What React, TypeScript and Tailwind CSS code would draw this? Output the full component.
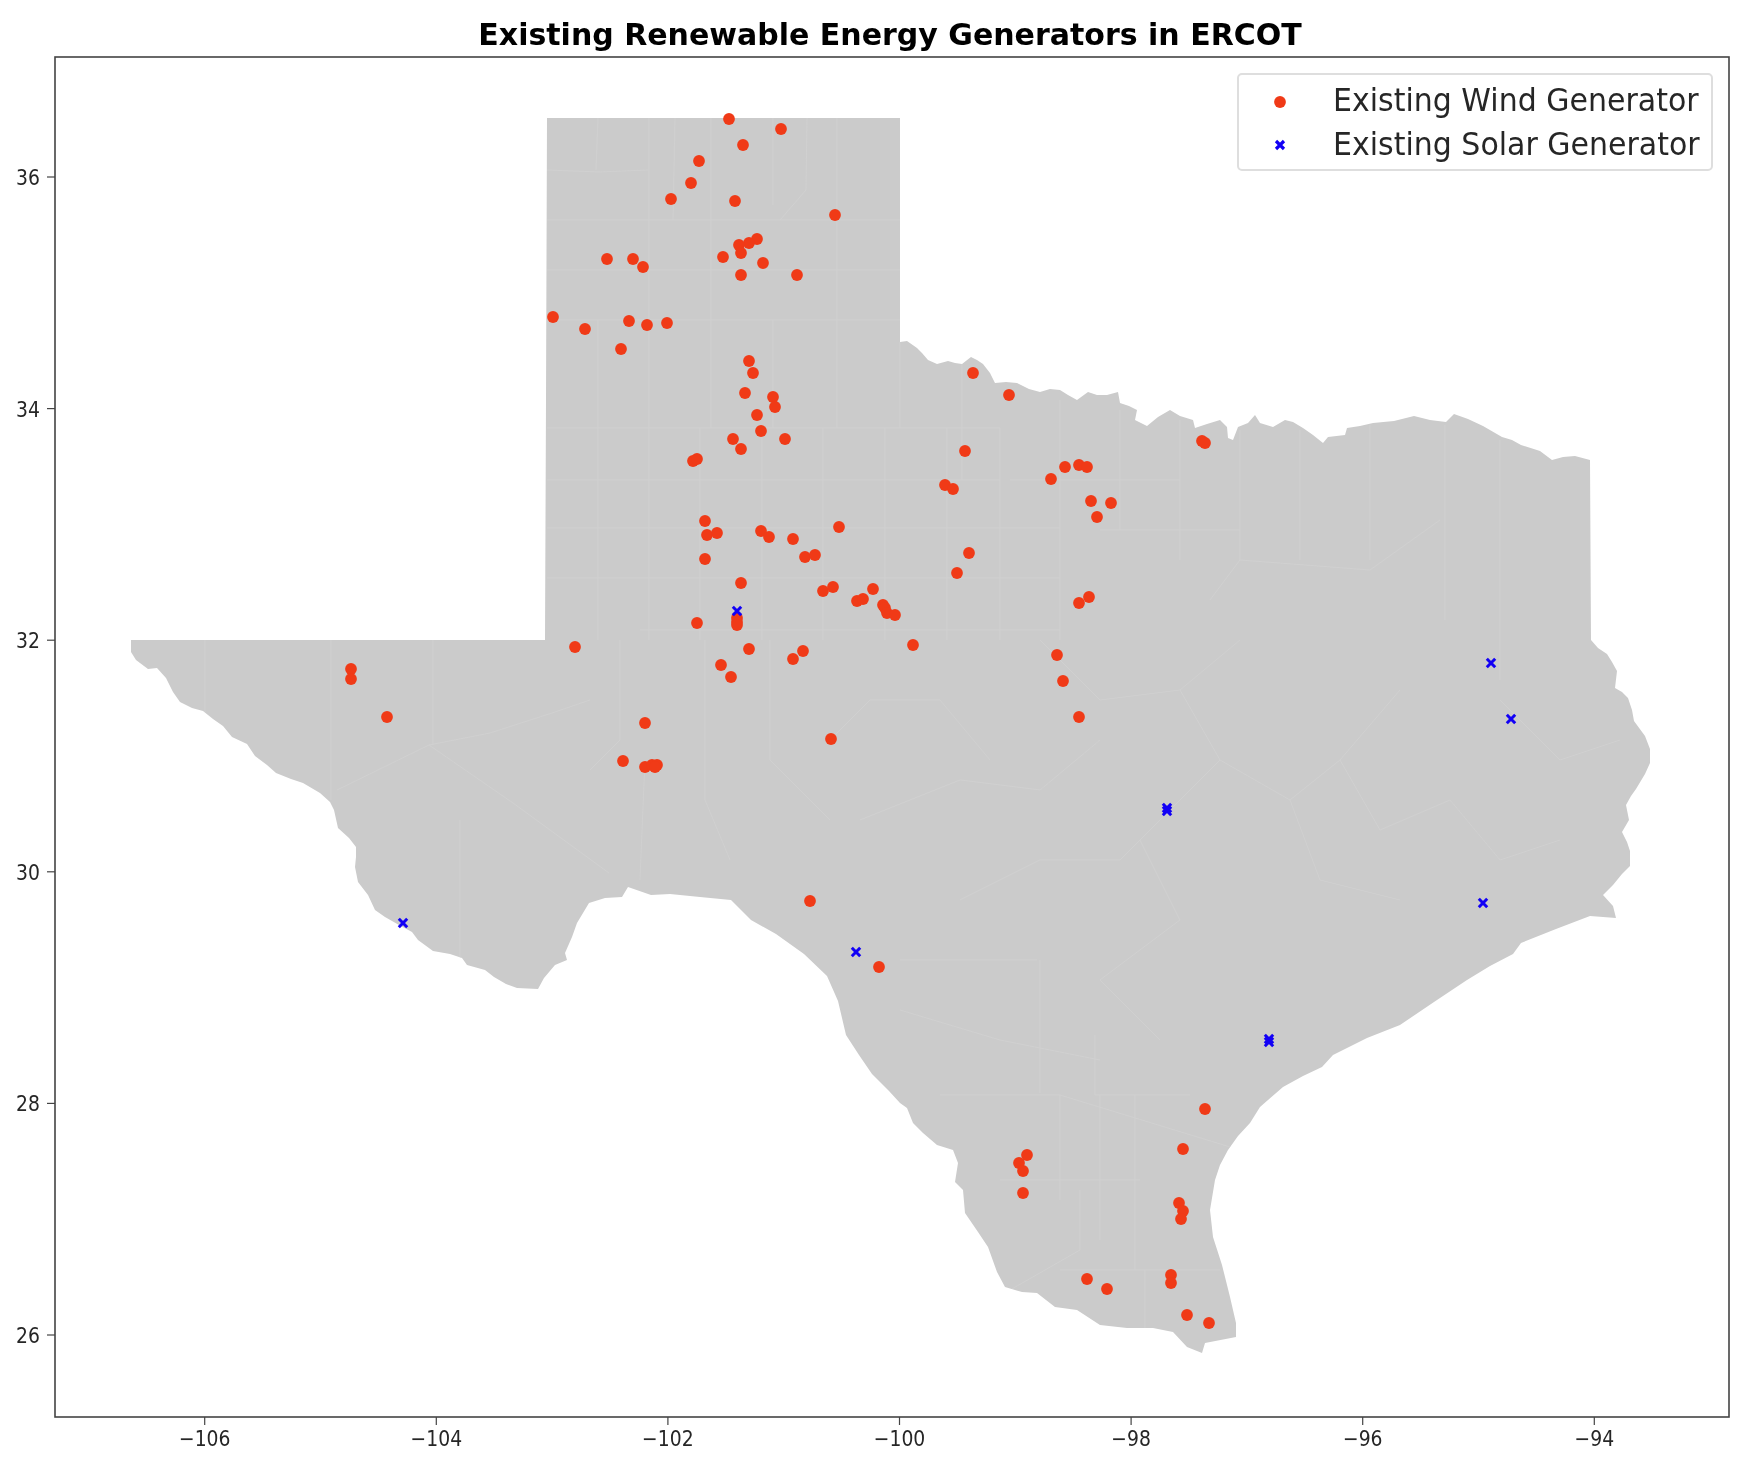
import React from 'react'

// everything below is in page pixels, chart svg starts at y=0 of the page
const land = `547,118 900,118 900,342 907,341 917,348 922,353 928,360 937,364 948,361 955,363 962,364 971,357 977,360 983,364 990,373 995,383 1006,382 1017,383 1029,389 1040,392 1050,389 1060,390 1068,395 1077,400 1088,392 1097,395 1107,395 1118,392 1120,403 1129,406 1137,410 1135,420 1147,426 1158,417 1170,410 1180,416 1193,420 1195,428 1207,424 1220,420 1227,427 1228,438 1233,440 1238,427 1248,423 1255,415 1260,423 1273,427 1285,420 1293,422 1303,428 1313,435 1323,443 1328,437 1345,435 1347,428 1360,426 1373,423 1394,421 1414,416 1430,420 1446,422 1454,414 1468,419 1483,426 1502,437 1512,440 1521,445 1540,451 1552,460 1563,457 1575,456 1590,460 1591,640 1598,648 1607,654 1612,662 1617,671 1615,688 1622,692 1628,698 1632,710 1634,721 1645,736 1650,749 1650,763 1645,774 1636,789 1631,796 1626,805 1629,820 1622,832 1627,842 1630,851 1630,866 1622,874 1613,885 1603,895 1613,906 1616,918 1590,916 1556,929 1521,943 1513,954 1490,966 1467,980 1434,1002 1400,1025 1367,1038 1333,1055 1322,1067 1303,1076 1283,1087 1260,1107 1250,1123 1238,1136 1228,1150 1220,1165 1215,1180 1210,1210 1213,1237 1222,1265 1230,1297 1236,1323 1236,1337 1205,1343 1202,1353 1187,1347 1173,1332 1153,1328 1127,1328 1100,1325 1077,1310 1055,1307 1037,1293 1022,1292 1005,1287 997,1272 988,1247 978,1232 965,1213 963,1190 955,1182 958,1163 953,1150 937,1145 923,1133 913,1123 907,1108 900,1103 889,1091 872,1074 859,1055 846,1035 842,1018 838,1001 827,976 804,954 776,934 751,920 731,900 700,897 670,894 651,895 628,887 622,897 605,898 589,903 577,923 572,937 565,953 567,960 555,965 544,978 538,989 517,988 506,984 494,977 485,970 467,965 462,958 450,954 433,951 418,940 412,932 399,925 385,917 375,910 368,895 358,882 355,867 356,857 356,847 349,838 338,828 334,810 330,802 320,793 303,783 291,779 276,773 267,765 255,756 247,744 232,737 223,726 213,719 203,711 192,708 180,702 173,692 166,678 157,668 148,669 136,660 131,652 131,640 545,640 546,400`

const countyLines = [
  '547,170 600,172 648,170', '649,118 649,320', '711,118 711,320', '773,118 773,205', '837,118 837,320',
  '598,118 596,170', '675,118 673,220', '807,118 806,190 780,220', '547,220 900,220', '547,270 900,270',
  '547,320 900,320', '547,428 1000,428', '598,320 598,428', '649,320 649,428', '711,320 711,428',
  '773,320 773,428', '837,320 837,428', '900,342 900,428', '962,364 962,480', '547,480 1000,480',
  '598,428 598,640', '649,428 649,640', '700,428 700,640', '762,428 762,640', '823,428 823,640',
  '885,428 885,640', '947,428 947,640', '1000,428 1000,640', '547,528 1060,528', '547,578 1060,578',
  '640,630 1060,630', '1060,400 1060,640', '1120,410 1120,530', '1180,420 1180,560', '1010,480 1180,480',
  '1240,430 1240,560 1210,600', '1300,430 1300,560', '1370,425 1370,560', '1445,425 1445,620', '1500,440 1500,680',
  '1100,530 1240,530', '1240,560 1370,570 1440,520', '205,640 205,712', '331,640 331,800', '433,640 433,745',
  '337,790 429,745 513,803 609,873', '429,745 490,733 552,713 590,700', '460,820 460,958', '620,640 620,740 590,770',
  '645,760 640,880', '705,640 705,800 730,860', '770,640 770,760 830,820', '830,740 870,700 940,700 990,760',
  '860,820 960,780 1040,790 1100,740', '960,900 1040,860 1120,860 1180,800', '1040,640 1100,700 1180,690 1240,640',
  '1180,690 1220,760 1290,800 1340,760', '1290,800 1320,880 1400,900', '1400,690 1340,760 1380,830 1450,800',
  '1450,800 1500,860 1560,840', '1500,700 1560,760 1620,740', '1220,760 1140,840 1180,920', '1180,920 1100,980 1160,1040',
  '900,960 1037,960', '1040,960 1040,1093', '900,1010 1000,1040 1100,1060', '1095,1035 1095,1095 1190,1095',
  '1100,1095 1100,1240', '940,1095 1060,1095 1240,1150', '1060,1095 1060,1200', '1000,1180 1140,1180', '1135,1095 1135,1190',
  '1135,1190 1135,1270', '1080,1190 1080,1250 1010,1290', '1060,1270 1220,1270', '1145,1270 1145,1330',
]

const wind: [number, number][] = [
  [729, 119], [781, 129], [743, 145], [699, 161], [691, 183], [671, 199], [735, 201], [835, 215], [757, 239], [749, 243],
  [739, 245], [741, 253], [723, 257], [763, 263], [741, 275], [797, 275], [607, 259], [633, 259], [643, 267], [553, 317],
  [585, 329], [629, 321], [647, 325], [667, 323], [621, 349], [749, 361], [753, 373], [745, 393], [773, 397], [775, 407],
  [757, 415], [761, 431], [733, 439], [741, 449], [785, 439], [693, 461], [697, 459], [945, 485], [953, 489], [705, 521],
  [707, 535], [717, 533], [705, 559], [761, 531], [769, 537], [793, 539], [839, 527], [805, 557], [815, 555], [741, 583],
  [823, 591], [833, 587], [873, 589], [857, 601], [863, 599], [883, 605], [885, 608], [887, 613], [895, 615], [697, 623],
  [737, 618], [737, 622], [737, 625], [749, 649], [721, 665], [731, 677], [793, 659], [803, 651], [913, 645], [969, 553],
  [957, 573], [1091, 501], [1111, 503], [1097, 517], [1089, 597], [1079, 603], [1057, 655], [1063, 681], [1079, 717],
  [831, 739], [645, 723], [645, 767], [652, 765], [657, 765], [655, 767], [623, 761], [973, 373], [1009, 395], [965, 451],
  [1051, 479], [1065, 467], [1079, 465], [1087, 467], [1202, 441], [1205, 443], [575, 647], [351, 669], [351, 679], [387, 717],
  [810, 901], [879, 967], [1205, 1109], [1183, 1149], [1027, 1155], [1019, 1163], [1023, 1171], [1023, 1193], [1179, 1203],
  [1183, 1211], [1181, 1219], [1171, 1275], [1171, 1283], [1087, 1279], [1107, 1289], [1187, 1315], [1209, 1323],
]

const solar: [number, number][] = [
  [737, 611], [403, 923], [856, 952], [1491, 663], [1511, 719], [1167, 808], [1167, 811], [1483, 903], [1269, 1039], [1269, 1042],
]

const xTicks = [-106, -104, -102, -100, -98, -96, -94]
const yTicks = [36, 34, 32, 30, 28, 26]
const xPos = (lon: number) => 204.7 + (lon + 106) * 115.8
const yPos = (lat: number) => 177 + (36 - lat) * 115.8

function Cross({ x, y }: { x: number; y: number }) {
  return <path d={`M${x - 4.2} ${y - 4.2}L${x + 4.2} ${y + 4.2}M${x - 4.2} ${y + 4.2}L${x + 4.2} ${y - 4.2}`} stroke="#1200f5" strokeWidth="3" fill="none" />
}

function Legend() {
  return (
    <div className="absolute top-[17px] right-[51px] w-[476px] h-[98px] bg-white border-2 border-[#dedede] rounded-[5px] flex flex-col justify-center pl-[34px] pb-[2px] gap-[5px] text-[#262626] text-[30px] leading-[39px]">
      <div className="flex items-center gap-[46px]">
        <svg width="14" height="14" viewBox="0 0 14 14" className="mt-[6px]"><circle cx="7" cy="7" r="5.9" fill="#f03a17" /></svg>
        <span className="scale-y-[1.06]">Existing Wind Generator</span>
      </div>
      <div className="flex items-center gap-[46px]">
        <svg width="14" height="14" viewBox="0 0 14 14" className="mt-[4px]"><path d="M3 3L11 11M3 11L11 3" stroke="#1200f5" strokeWidth="3.2" /></svg>
        <span className="scale-y-[1.06]">Existing Solar Generator</span>
      </div>
    </div>
  )
}

export default function App() {
  return (
    <div className="w-[1764px] h-[1480px] bg-white font-['DejaVu_Sans',sans-serif] blur-[0.5px]">
      <h1 className="h-[56px] pt-[17px] pl-[16px] text-center text-black font-bold text-[30px] leading-[36px]">
        Existing Renewable Energy Generators in ERCOT
      </h1>
      <div className="relative">
        <svg width="1764" height="1424" viewBox="0 56 1764 1424" className="block">
          <defs>
            <clipPath id="texas"><polygon points={land} /></clipPath>
          </defs>
          <polygon points={land} fill="#cbcbcb" />
          <g clipPath="url(#texas)" stroke="#d0d0d0" strokeWidth="1" fill="none">
            {countyLines.map((pts) => <polyline key={pts} points={pts} />)}
          </g>
          {wind.map(([x, y], i) => <circle key={i} cx={x} cy={y} r="5.9" fill="#f03a17" />)}
          {solar.map(([x, y], i) => <Cross key={i} x={x} y={y} />)}

          <rect x="55" y="57" width="1674" height="1360" fill="none" stroke="#444" strokeWidth="1.6" />
          {xTicks.map((t) => (
            <g key={t}>
              <line x1={xPos(t)} x2={xPos(t)} y1="1417" y2="1425" stroke="#444" strokeWidth="1.2" />
              <text transform={`translate(${xPos(t)} 1446) scale(1 1.12)`} textAnchor="middle" fontSize="18.8" fill="#262626">{'\u2212' + Math.abs(t)}</text>
            </g>
          ))}
          {yTicks.map((t) => (
            <g key={t}>
              <line x1="47" x2="55" y1={yPos(t)} y2={yPos(t)} stroke="#444" strokeWidth="1.2" />
              <text transform={`translate(40 ${yPos(t) + 8}) scale(1 1.12)`} textAnchor="end" fontSize="18.8" fill="#262626">{t}</text>
            </g>
          ))}
        </svg>
        <Legend />
      </div>
    </div>
  )
}
